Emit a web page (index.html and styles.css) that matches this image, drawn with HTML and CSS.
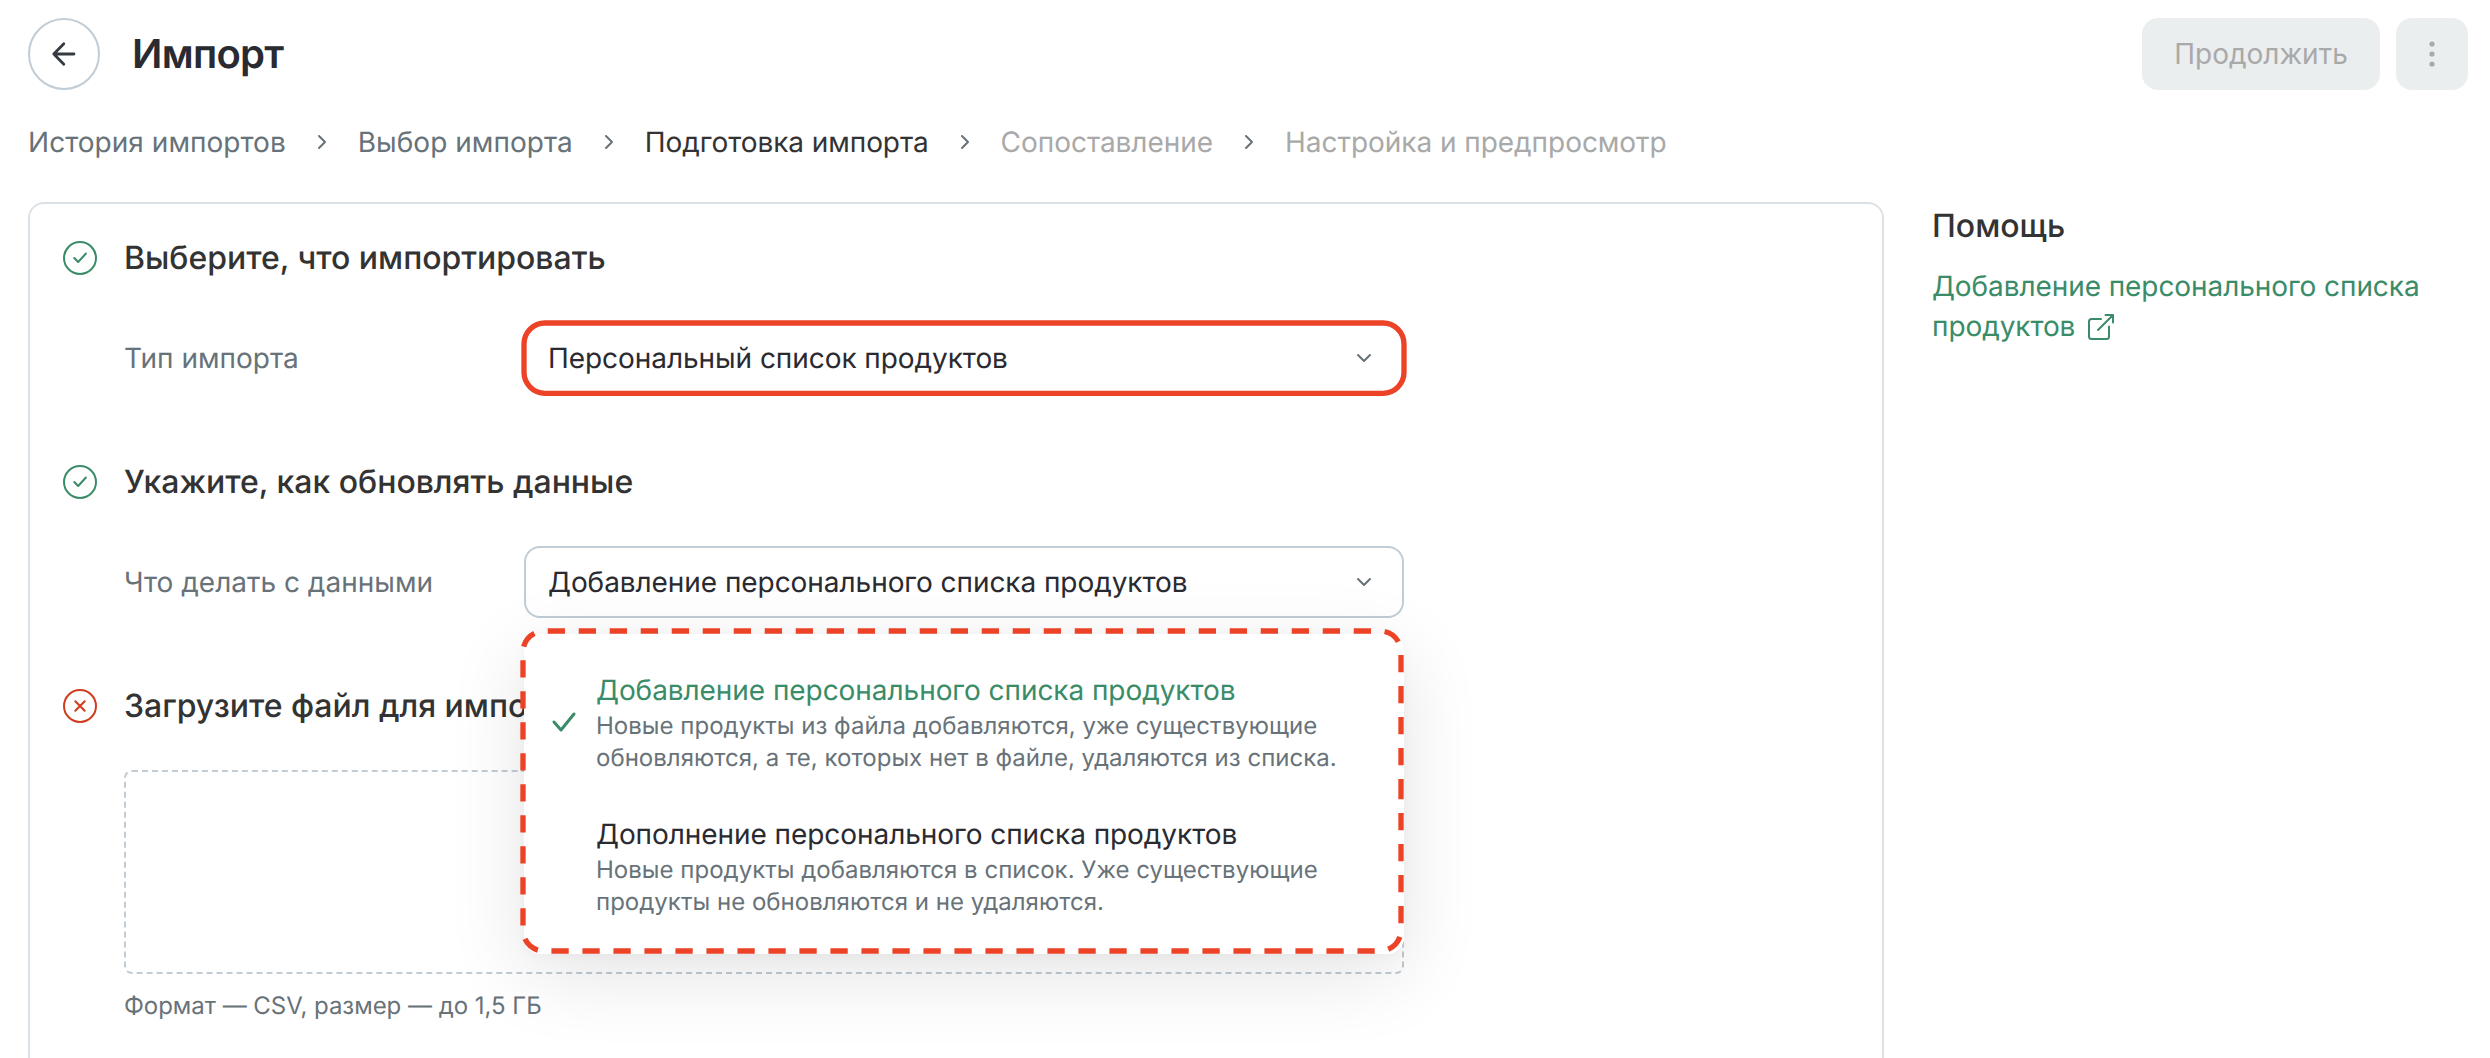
FILE: index.html
```html
<!DOCTYPE html>
<html lang="ru">
<head>
<meta charset="utf-8">
<title>Импорт</title>
<link rel="stylesheet" href="styles.css">
</head>
<body>
<header class="header">
  <button class="back" aria-label="Назад"><svg width="32" height="32" viewBox="0 0 32 32"><path d="M15.800 5.800 5.800 16l10 10.200M5.800 16H26"/></svg></button>
  <h1 class="title">Импорт</h1>
  <div class="actions">
    <button class="btn" disabled>Продолжить</button>
    <button class="btn btn-more" disabled aria-label="Ещё"><svg width="8" height="28" viewBox="0 0 8 28"><circle cx="4" cy="4" r="2.600"/><circle cx="4" cy="14" r="2.600"/><circle cx="4" cy="24" r="2.600"/></svg></button>
  </div>
</header>
<nav class="crumbs">
  <a class="crumb">История импортов</a>
  <svg class="sep" width="10" height="16" viewBox="0 0 10 16"><path d="M2 2l6 6-6 6"/></svg>
  <a class="crumb">Выбор импорта</a>
  <svg class="sep" width="10" height="16" viewBox="0 0 10 16"><path d="M2 2l6 6-6 6"/></svg>
  <span class="crumb current">Подготовка импорта</span>
  <svg class="sep" width="10" height="16" viewBox="0 0 10 16"><path d="M2 2l6 6-6 6"/></svg>
  <span class="crumb off">Сопоставление</span>
  <svg class="sep" width="10" height="16" viewBox="0 0 10 16"><path d="M2 2l6 6-6 6"/></svg>
  <span class="crumb off">Настройка и предпросмотр</span>
</nav>
<main class="layout">
  <div class="panel">
    <section class="step">
      <svg class="status ok" width="34" height="34" viewBox="0 0 34 34"><circle cx="17" cy="17" r="16"/><path d="M11.300 17l3.900 4L22.900 12.500"/></svg>
      <div class="body">
        <h2 class="heading">Выберите, что импортировать</h2>
        <div class="row">
          <label class="label">Тип импорта</label>
          <div class="select">
            <span>Персональный список продуктов</span>
            <svg class="chev" width="16" height="10" viewBox="0 0 16 10"><path d="M2 2l6 6 6-6"/></svg>
            <svg class="mark" width="890" height="80"><rect x="5" y="5" width="880" height="70.300" rx="21"/></svg>
          </div>
        </div>
      </div>
    </section>
    <section class="step">
      <svg class="status ok" width="34" height="34" viewBox="0 0 34 34"><circle cx="17" cy="17" r="16"/><path d="M11.300 17l3.900 4L22.900 12.500"/></svg>
      <div class="body">
        <h2 class="heading">Укажите, как обновлять данные</h2>
        <div class="row">
          <label class="label">Что делать с данными</label>
          <div class="select">
            <span>Добавление персонального списка продуктов</span>
            <svg class="chev" width="16" height="10" viewBox="0 0 16 10"><path d="M2 2l6 6 6-6"/></svg>
            <div class="menu">
              <div class="option active">
                <svg class="tick" width="26" height="22" viewBox="0 0 26 22"><path d="M3 11l7 8L23 3"/></svg>
                <div class="name">Добавление персонального списка продуктов</div>
                <div class="desc">Новые продукты из файла добавляются, уже существующие<br>обновляются, а те, которых нет в файле, удаляются из списка.</div>
              </div>
              <div class="option">
                <div class="name">Дополнение персонального списка продуктов</div>
                <div class="desc">Новые продукты добавляются в список. Уже существующие<br>продукты не обновляются и не удаляются.</div>
              </div>
              <svg class="frame" width="890" height="332" viewBox="518 626 890 332"><path d="M1401 790.700V930a21 21 0 0 1-21 21H544a21 21 0 0 1-21-21V652a21 21 0 0 1 21-21H1380a21 21 0 0 1 21 21Z"/></svg>
            </div>
          </div>
        </div>
      </div>
    </section>
    <section class="step">
      <svg class="status bad" width="34" height="34" viewBox="0 0 34 34"><circle cx="17" cy="17" r="16"/><path d="M12.300 12.300l9.400 9.400M21.700 12.300l-9.400 9.400"/></svg>
      <div class="body">
        <h2 class="heading">Загрузите файл для импорта</h2>
        <div class="drop"></div>
        <p class="hint">Формат — CSV, размер — до 1,5 ГБ</p>
      </div>
    </section>
  </div>
  <aside class="help">
    <h2 class="help-title">Помощь</h2>
    <a class="link">Добавление персонального списка продуктов <svg class="ext" width="28" height="28" viewBox="0 0 28 28"><path d="M14 6H4.500Q2 6 2 8.500v15Q2 26 4.500 26h15Q22 26 22 23.500V13.500M18.500 2H26V9.500M26 2 11 17"/></svg></a>
  </aside>
</main>
</body>
</html>
```
FILE: styles.css
```css
* { box-sizing: border-box; }
body {
  margin: 0;
  height: 1058px;
  overflow: hidden;
  background: #fff;
  color: #333;
  font: 400 28px/40px Inter, sans-serif;
  text-rendering: geometricPrecision;
}
svg { fill: none; stroke-linecap: round; stroke-linejoin: round; flex: none; }
h1, h2, p { margin: 0; }
button { font: inherit; padding: 0; border: 0; }

.header { display: flex; align-items: center; padding: 18px 22px 0 28px; }
.back {
  width: 72px; height: 72px;
  display: flex; align-items: center; justify-content: center;
  border: 2px solid #c1ccd4; border-radius: 50%; background: #fff;
}
.back path { stroke: #343a40; stroke-width: 2.8; }
.title { margin-left: 32px; font-size: 40px; line-height: 48px; font-weight: 600; letter-spacing: -.7px; color: #2a2a31; }
.actions { margin-left: auto; display: flex; gap: 16px; }
.btn {
  width: 238px; height: 72px;
  display: flex; align-items: center; justify-content: center;
  border-radius: 16px; background: #ebeeef; color: #a9a9a9;
}
.btn-more { width: 72px; }
.btn-more circle { fill: #a9a9a9; }

.crumbs { display: flex; align-items: center; margin: 32px 0 0 28px; height: 40px; }
.crumb { color: #687279; white-space: nowrap; letter-spacing: .03px; }
.crumb.current { color: #333; letter-spacing: -.06px; }
.crumb.off { color: #a9a9a9; letter-spacing: -.04px; }
.sep { margin: 0 31px; }
.sep path { stroke: #687279; stroke-width: 2; }

.layout { display: flex; align-items: flex-start; gap: 48px; margin: 40px 0 0 28px; }
.panel {
  width: 1856px; height: 900px;
  padding: 34px 0 0 33px;
  border: 2px solid #dbe2e7; border-radius: 16px;
}
.step { display: flex; height: 224px; }
.status { margin-top: 3px; stroke-width: 2; }
.ok { stroke: #3a8c68; }
.bad { stroke: #d03b1c; }
.body { margin-left: 27px; width: 1280px; }
.heading { font-size: 32px; line-height: 40px; font-weight: 500; letter-spacing: -.02px; white-space: nowrap; }
.row { display: flex; align-items: center; margin-top: 44px; }
.label { width: 400px; color: #687279; }
.select {
  position: relative;
  width: 880px; height: 72px;
  display: flex; align-items: center; justify-content: space-between;
  padding: 0 30px 0 22px;
  border: 2px solid #c1ccd4; border-radius: 16px;
  color: #2a2a31; white-space: nowrap; letter-spacing: -.06px;
}
.chev path { stroke: #687279; stroke-width: 2; }
.mark { position: absolute; left: -7px; top: -6px; }
.mark rect, .frame path { stroke: #ec4226; stroke-width: 5.33; stroke-linecap: butt; }
.frame { position: absolute; left: -6px; top: -8px; }
.frame path { stroke-dasharray: 17.3 13.7; stroke-dashoffset: 8.65; }

.menu {
  position: absolute; left: -2px; top: 86px; z-index: 2;
  width: 880px; height: 320px; padding: 16px 0;
  border-radius: 16px; background: #fff;
  box-shadow: 0 20px 80px rgba(0, 0, 0, .11), 0 2px 12px rgba(0, 0, 0, .03);
}
.option { position: relative; height: 144px; padding: 20px 0 0 72px; }
.active .name { color: #3a8c68; }
.tick { position: absolute; left: 27px; top: 61px; }
.tick path { stroke: #3a8c68; stroke-width: 3; }
.desc { font-size: 24px; line-height: 32px; letter-spacing: .02px; color: #687279; }

.drop { height: 204px; margin-top: 44px; border: 2px dashed #c1ccd4; border-radius: 8px; }
.hint { margin-top: 16px; font-size: 24px; line-height: 32px; letter-spacing: -.03px; color: #687279; }

.help { padding-top: 4px; width: 500px; }
.help-title { font-size: 32px; line-height: 40px; font-weight: 500; }
.link { display: block; margin-top: 20px; letter-spacing: -.08px; color: #3a8c68; }
.ext { margin-left: 4px; vertical-align: -5px; stroke: #3a8c68; stroke-width: 2; }
```
